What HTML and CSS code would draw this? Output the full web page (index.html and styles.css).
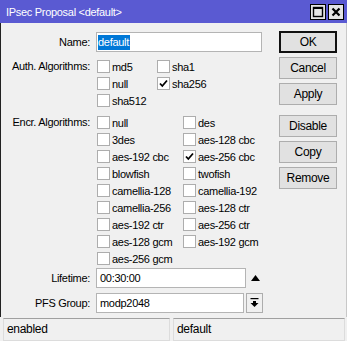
FILE: index.html
```html
<!DOCTYPE html>
<html lang="en">
<head>
    <meta charset="UTF-8">
    <title>IPsec Proposal &lt;default&gt;</title>
    <link rel="stylesheet" href="styles.css">
</head>
<body>
    <div class="window">
        <div class="titlebar">
            <span class="title">IPsec Proposal &lt;default&gt;</span>
            <div class="title-buttons">
                <div class="tbtn">
                    <svg width="14" height="14" viewBox="0 0 14 14"><rect x="2.5" y="2.5" width="9" height="9" fill="none" stroke="#000" stroke-width="1.4"/><line x1="2.5" y1="3" x2="11.5" y2="3" stroke="#000" stroke-width="2"/></svg>
                </div>
                <div class="tbtn">
                    <svg width="14" height="14" viewBox="0 0 14 14"><path d="M3.5 3.5 L10.5 10.5 M10.5 3.5 L3.5 10.5" stroke="#000" stroke-width="2.2"/></svg>
                </div>
            </div>
        </div>

        <div class="content">
            <div class="form">
                <div class="row name-row">
                    <label>Name:</label>
                    <div class="field name-field"><span class="selected">default</span></div>
                </div>

                <div class="row group auth">
                    <label>Auth. Algorithms:</label>
                    <div class="checks auth-checks">
                        <div class="check"><span class="box"></span>md5</div>
                        <div class="check"><span class="box"></span>sha1</div>
                        <div class="check"><span class="box"></span>null</div>
                        <div class="check"><span class="box checked"><svg width="11" height="11" viewBox="0 0 11 11"><path d="M2 5.5 L4.3 8 L9 2.5" fill="none" stroke="#000" stroke-width="1.8"/></svg></span>sha256</div>
                        <div class="check"><span class="box"></span>sha512</div>
                    </div>
                </div>

                <div class="row group encr">
                    <label>Encr. Algorithms:</label>
                    <div class="checks encr-checks">
                        <div class="check"><span class="box"></span>null</div>
                        <div class="check"><span class="box"></span>des</div>
                        <div class="check"><span class="box"></span>3des</div>
                        <div class="check"><span class="box"></span>aes-128 cbc</div>
                        <div class="check"><span class="box"></span>aes-192 cbc</div>
                        <div class="check"><span class="box checked"><svg width="11" height="11" viewBox="0 0 11 11"><path d="M2 5.5 L4.3 8 L9 2.5" fill="none" stroke="#000" stroke-width="1.8"/></svg></span>aes-256 cbc</div>
                        <div class="check"><span class="box"></span>blowfish</div>
                        <div class="check"><span class="box"></span>twofish</div>
                        <div class="check"><span class="box"></span>camellia-128</div>
                        <div class="check"><span class="box"></span>camellia-192</div>
                        <div class="check"><span class="box"></span>camellia-256</div>
                        <div class="check"><span class="box"></span>aes-128 ctr</div>
                        <div class="check"><span class="box"></span>aes-192 ctr</div>
                        <div class="check"><span class="box"></span>aes-256 ctr</div>
                        <div class="check"><span class="box"></span>aes-128 gcm</div>
                        <div class="check"><span class="box"></span>aes-192 gcm</div>
                        <div class="check"><span class="box"></span>aes-256 gcm</div>
                    </div>
                </div>

                <div class="row lifetime-row">
                    <label>Lifetime:</label>
                    <div class="field-line">
                        <div class="field lifetime-field">00:30:00</div>
                        <svg class="up-arrow" width="9" height="6" viewBox="0 0 9 6"><polygon points="0,6 9,6 4.5,0" fill="#000"/></svg>
                    </div>
                </div>

                <div class="row pfs-row">
                    <label>PFS Group:</label>
                    <div class="field-line">
                        <div class="field pfs-field">modp2048</div>
                        <div class="drop-btn">
                            <svg width="9" height="10" viewBox="0 0 9 10"><rect x="0.5" y="0" width="8" height="1.2" fill="#000"/><rect x="3" y="3" width="3" height="2.5" fill="#000"/><polygon points="0.5,5 8.5,5 4.5,9" fill="#000"/></svg>
                        </div>
                    </div>
                </div>
            </div>

            <div class="buttons">
                <div class="btn default-btn">OK</div>
                <div class="btn">Cancel</div>
                <div class="btn">Apply</div>
                <div class="btn spaced">Disable</div>
                <div class="btn">Copy</div>
                <div class="btn">Remove</div>
            </div>
        </div>

        <div class="statusbar">
            <div class="panel first">enabled</div>
            <div class="panel second">default</div>
        </div>
    </div>
</body>
</html>
```

FILE: styles.css
```css
body {
    margin: 0;
    padding: 0;
    background-color: #f0f0f0;
    font-family: "Liberation Sans", Arial, sans-serif;
    font-size: 11px;
    letter-spacing: -0.3px;
    color: #000;
}
.window {
    width: 347px;
    height: 341px;
    display: flex;
    flex-direction: column;
    overflow: hidden;
}
.titlebar {
    height: 23px;
    background-color: #5a5ad2;
    color: white;
    display: flex;
    align-items: center;
    padding-left: 6px;
    flex-shrink: 0;
}
.title {
    font-size: 11px;
}
.title-buttons {
    margin-left: auto;
    display: flex;
    gap: 2px;
    padding-right: 3px;
}
.tbtn {
    width: 16px;
    height: 16px;
    box-sizing: border-box;
    border: 1px solid #000;
    background-color: #e4e4e4;
    display: flex;
    align-items: center;
    justify-content: center;
}
.content {
    flex: 1;
    display: flex;
    border-left: 1px solid #222;
    border-right: 1px solid #c8c8c8;
}
.form {
    width: 278px;
    padding-top: 9px;
}
.row {
    display: grid;
    grid-template-columns: 89px 1fr;
    column-gap: 6px;
}
.row label {
    text-align: right;
    line-height: 17px;
}
.name-row label,
.lifetime-row label,
.pfs-row label {
    line-height: 20px;
}
.field {
    height: 20px;
    box-sizing: border-box;
    border: 1px solid #b4b4b4;
    background-color: white;
    line-height: 18px;
    padding-left: 3px;
}
.name-field {
    width: 166px;
    padding-left: 1px;
    display: flex;
    align-items: center;
}
.selected {
    background-color: #0078d7;
    color: white;
    line-height: 15px;
    padding-right: 1px;
}
.auth {
    margin-top: 6px;
}
.encr {
    margin-top: 5px;
}
.checks {
    display: grid;
}
.auth-checks {
    grid-template-columns: 60px 60px;
}
.encr-checks {
    grid-template-columns: 86px 86px;
}
.check {
    height: 17px;
    display: flex;
    align-items: center;
    white-space: nowrap;
    padding-left: 1px;
}
.box {
    width: 13px;
    height: 13px;
    box-sizing: border-box;
    border: 1px solid #adadad;
    background-color: white;
    margin-right: 2px;
    display: flex;
    align-items: center;
    justify-content: center;
}
.lifetime-row {
    margin-top: 1px;
}
.pfs-row {
    margin-top: 5px;
}
.field-line {
    display: flex;
    align-items: center;
}
.lifetime-field {
    width: 150px;
}
.up-arrow {
    margin-left: 5px;
}
.pfs-field {
    width: 148px;
}
.drop-btn {
    width: 17px;
    height: 20px;
    box-sizing: border-box;
    border: 1px solid #adadad;
    margin-left: 2px;
    background-color: #f0f0f0;
    display: flex;
    align-items: center;
    justify-content: center;
}
.buttons {
    display: flex;
    flex-direction: column;
    gap: 4px;
    padding-top: 8px;
    margin-left: 0;
}
.btn {
    width: 58px;
    height: 22px;
    box-sizing: border-box;
    border: 1px solid #adadad;
    background-color: #e1e1e1;
    display: flex;
    align-items: center;
    justify-content: center;
    font-size: 12px;
}
.default-btn {
    border: 2px solid #111;
}
.spaced {
    margin-top: 6px;
}
.statusbar {
    height: 23px;
    display: flex;
    gap: 3px;
    padding: 1px 2px 0 3px;
    flex-shrink: 0;
}
.panel {
    box-sizing: border-box;
    border: 1px solid #dcdcdc;
    border-top-color: #a0a0a0;
    line-height: 20px;
    padding-left: 3px;
    font-size: 12px;
}
.first {
    width: 167px;
}
.second {
    flex: 1;
}
```
